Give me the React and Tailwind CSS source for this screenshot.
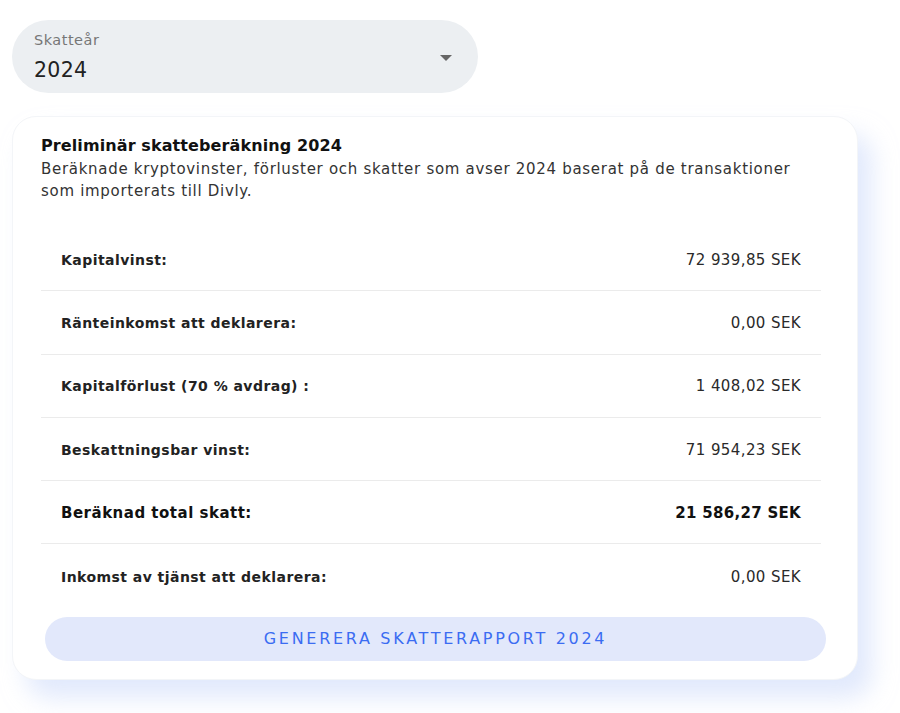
import React from "react";

const rows = [
  { label: "Kapitalvinst:", value: "72 939,85 SEK" },
  { label: "Ränteinkomst att deklarera:", value: "0,00 SEK" },
  { label: "Kapitalförlust (70 % avdrag) :", value: "1 408,02 SEK" },
  { label: "Beskattningsbar vinst:", value: "71 954,23 SEK" },
  { label: "Beräknad total skatt:", value: "21 586,27 SEK", bold: true },
  { label: "Inkomst av tjänst att deklarera:", value: "0,00 SEK", last: true },
];

export default function App() {
  return (
    <div
      className="w-[900px] h-[713px] bg-white overflow-hidden"
      style={{ fontFamily: '"DejaVu Sans", sans-serif' }}
    >
      <div className="pl-[12px] pt-[20px]">
        <div className="w-[466px] h-[73px] rounded-[37px] bg-[#eceff2] flex items-center justify-between pl-[22px] pr-[26px]">
          <div className="flex flex-col">
            <span className="text-[14.5px] leading-[18px] text-[#777] tracking-[0.5px]">Skatteår</span>
            <span className="text-[20.5px] leading-[26px] text-[#222] mt-[8px] tracking-[0.3px]">2024</span>
          </div>
          <svg width="12" height="6" viewBox="0 0 12 6" className="mt-[2px]">
            <path d="M0 0 L12 0 L6 6 Z" fill="#666" />
          </svg>
        </div>
      </div>

      <div className="ml-[12px] mt-[23px] w-[846px] h-[564px] rounded-[24px] bg-white shadow-[14px_18px_24px_rgba(200,215,250,0.55)] border border-[#f3f5f8] px-[28px] pt-[18px]">
        <div className="text-[#111] font-bold text-[16px] leading-[22px] tracking-[0.1px]">
          Preliminär skatteberäkning 2024
        </div>
        <div className="text-[#333] text-[15px] leading-[22px] w-[780px] tracking-[0.7px] mt-[1px]">
          Beräknade kryptovinster, förluster och skatter som avser 2024 baserat på de transaktioner som importerats till Divly.
        </div>
        <div className="mt-[26px] w-[780px]">
          {rows.map((r) => (
            <div
              key={r.label}
              className={
                "h-[63.3px] flex items-center justify-between px-[20px] pt-[2px] " +
                (r.last ? "" : "border-b border-[#ebebeb]")
              }
            >
              <span
                className={
                  r.bold
                    ? "text-[15px] font-extrabold text-[#111] tracking-[0.5px]"
                    : "text-[14px] font-semibold text-[#222] tracking-[0.45px]"
                }
              >
                {r.label}
              </span>
              <span
                className={
                  r.bold
                    ? "text-[15px] font-extrabold text-[#111] tracking-[0.3px]"
                    : "text-[15px] text-[#2a2a2a] tracking-[0.4px]"
                }
              >
                {r.value}
              </span>
            </div>
          ))}
        </div>
        <button className="mt-[9px] ml-[4px] w-[781px] h-[44px] rounded-[22px] bg-[#e2e8fb] text-[#3b6cf2] text-[16px] tracking-[2.7px]">
          GENERERA SKATTERAPPORT 2024
        </button>
      </div>
    </div>
  );
}
